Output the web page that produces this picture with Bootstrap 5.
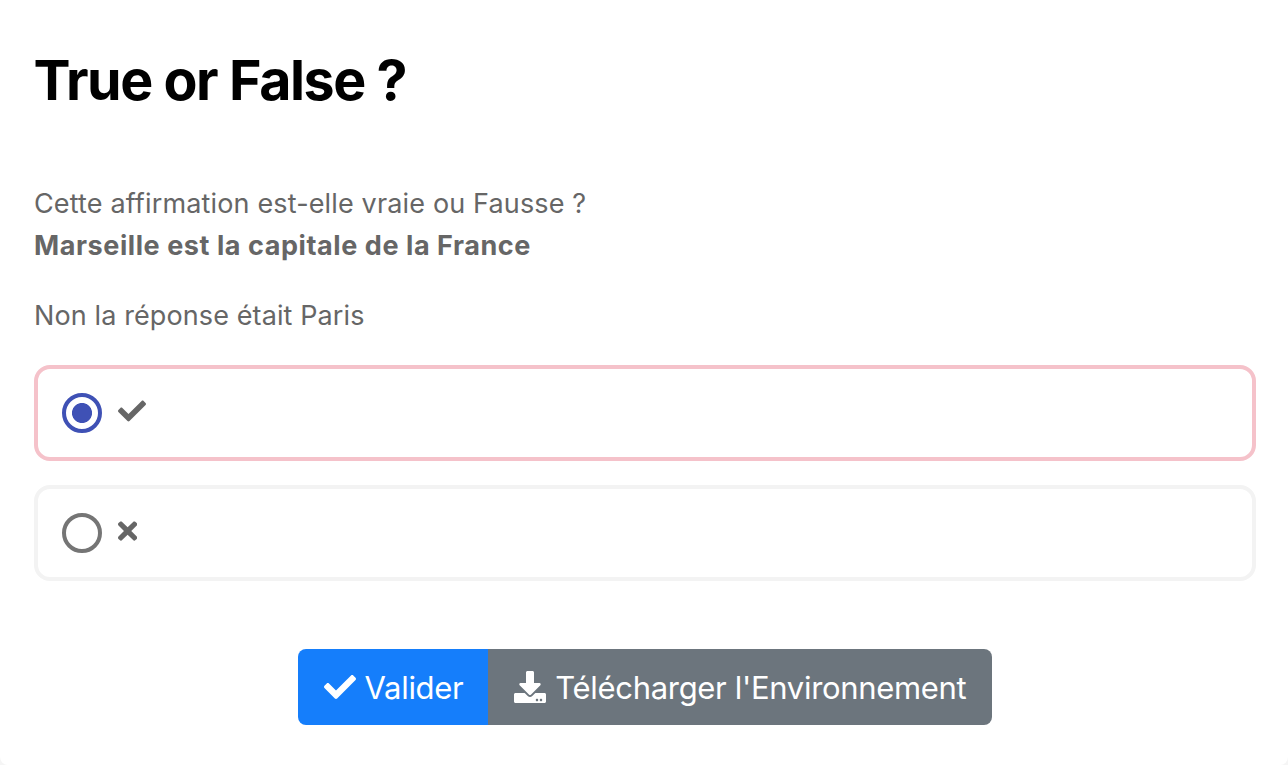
<!DOCTYPE html>
<html lang="fr">
<head>
<meta charset="utf-8">
<meta name="viewport" content="width=device-width, initial-scale=1">
<title>True or False ?</title>
<link href="https://cdn.jsdelivr.net/npm/bootstrap@5.3.0/dist/css/bootstrap.min.css" rel="stylesheet">
<style>
body { font-family: Inter, "Liberation Sans", sans-serif; background: #f5f5f5; overflow: hidden; }
.quiz { height: 765px; padding: 44px 32px 0 34px; border-radius: 0 0 8px 8px; color: #666; font-size: 27px; line-height: 42px; letter-spacing: .15px; }
.quiz-title { font-size: 55.5px; line-height: 72px; letter-spacing: -1.45px; color: #000; margin: 0 0 67px -.5px; }
.statement { letter-spacing: .57px; }
.feedback { margin: 28px 0; letter-spacing: .11px; }
.choice { height: 96px; border: 4px solid #f3f3f3; border-radius: 16px; padding: 0 24px; gap: 16px; margin-bottom: 24px; }
.choice.is-wrong { border-color: #f5c2ca; }
.choice .form-check-input { width: 40px; height: 40px; border: 4px solid #757575; background: none; box-shadow: none; }
.choice .form-check-input:checked { border-color: #3f51b5; background: radial-gradient(circle, #3f51b5 9.6px, transparent 10.4px); }
.choice svg { height: 28px; margin-bottom: 4px; }
.actions { margin-top: 68px; }
.actions .btn { height: 76px; border: 0; border-radius: 8px; font-size: 31px; line-height: 48px; letter-spacing: -.32px; padding: 0 26px; gap: 9px; }
.actions .btn svg { height: 32px; margin-bottom: 1px; }
.actions .btn span { padding-top: 2px; }
.actions .btn-primary { background: #157efb; }
.actions .btn-secondary { background: #6c757d; }
</style>
</head>
<body>
<main class="quiz bg-white">
  <h1 class="quiz-title fw-bold">True or False ?</h1>
  <p class="m-0">Cette affirmation est-elle vraie ou Fausse ?<br><strong class="statement">Marseille est la capitale de la France</strong></p>
  <p class="feedback">Non la réponse était Paris</p>
  <form>
    <label class="choice is-wrong d-flex align-items-center">
      <input class="form-check-input m-0 flex-shrink-0" type="radio" name="answer" aria-label="Vrai" checked>
      <svg viewBox="0 0 512 512" fill="currentColor" aria-hidden="true"><path d="M173.898 439.404l-166.4-166.4c-9.997-9.997-9.997-26.206 0-36.204l36.203-36.204c9.997-9.998 26.207-9.998 36.204 0L192 312.69 432.095 72.596c9.997-9.997 26.207-9.997 36.204 0l36.203 36.204c9.997 9.997 9.997 26.206 0 36.204l-294.4 294.401c-9.998 9.997-26.207 9.997-36.204-.001z"/></svg>
    </label>
    <label class="choice d-flex align-items-center">
      <input class="form-check-input m-0 flex-shrink-0" type="radio" name="answer" aria-label="Faux">
      <svg viewBox="0 0 352 512" fill="currentColor" aria-hidden="true"><path d="M242.72 256l100.07-100.07c12.28-12.28 12.28-32.19 0-44.48l-22.24-22.24c-12.28-12.28-32.19-12.28-44.48 0L176 189.28 75.93 89.21c-12.28-12.28-32.19-12.28-44.48 0L9.21 111.45c-12.28 12.28-12.28 32.19 0 44.48L109.28 256 9.21 356.07c-12.28 12.28-12.28 32.19 0 44.48l22.24 22.24c12.28 12.28 32.2 12.28 44.48 0L176 322.72l100.07 100.07c12.28 12.28 32.2 12.28 44.48 0l22.24-22.24c12.28-12.28 12.28-32.19 0-44.48L242.72 256z"/></svg>
    </label>
    <div class="actions d-flex justify-content-center">
      <div class="btn-group">
        <button type="button" class="btn btn-primary d-flex align-items-center">
          <svg viewBox="0 0 512 512" fill="currentColor" aria-hidden="true"><path d="M173.898 439.404l-166.4-166.4c-9.997-9.997-9.997-26.206 0-36.204l36.203-36.204c9.997-9.998 26.207-9.998 36.204 0L192 312.69 432.095 72.596c9.997-9.997 26.207-9.997 36.204 0l36.203 36.204c9.997 9.997 9.997 26.206 0 36.204l-294.4 294.401c-9.998 9.997-26.207 9.997-36.204-.001z"/></svg>
          <span>Valider</span>
        </button>
        <button type="button" class="btn btn-secondary d-flex align-items-center">
          <svg viewBox="0 0 512 512" fill="currentColor" aria-hidden="true"><path d="M216 0h80c13.3 0 24 10.7 24 24v168h87.7c17.8 0 26.7 21.5 14.1 34.1L269.7 378.3c-7.5 7.5-19.8 7.5-27.3 0L90.1 226.1c-12.6-12.6-3.7-34.1 14.1-34.1H192V24c0-13.3 10.7-24 24-24zm296 376v112c0 13.3-10.7 24-24 24H24c-13.3 0-24-10.7-24-24V376c0-13.3 10.7-24 24-24h146.7l49 49c20.1 20.1 52.5 20.1 72.6 0l49-49H488c13.3 0 24 10.7 24 24zm-124 88c0-11-9-20-20-20s-20 9-20 20 9 20 20 20 20-9 20-20zm64 0c0-11-9-20-20-20s-20 9-20 20 9 20 20 20 20-9 20-20z"/></svg>
          <span>Télécharger l'Environnement</span>
        </button>
      </div>
    </div>
  </form>
</main>
<script src="https://cdn.jsdelivr.net/npm/bootstrap@5.3.0/dist/js/bootstrap.bundle.min.js"></script>
</body>
</html>
